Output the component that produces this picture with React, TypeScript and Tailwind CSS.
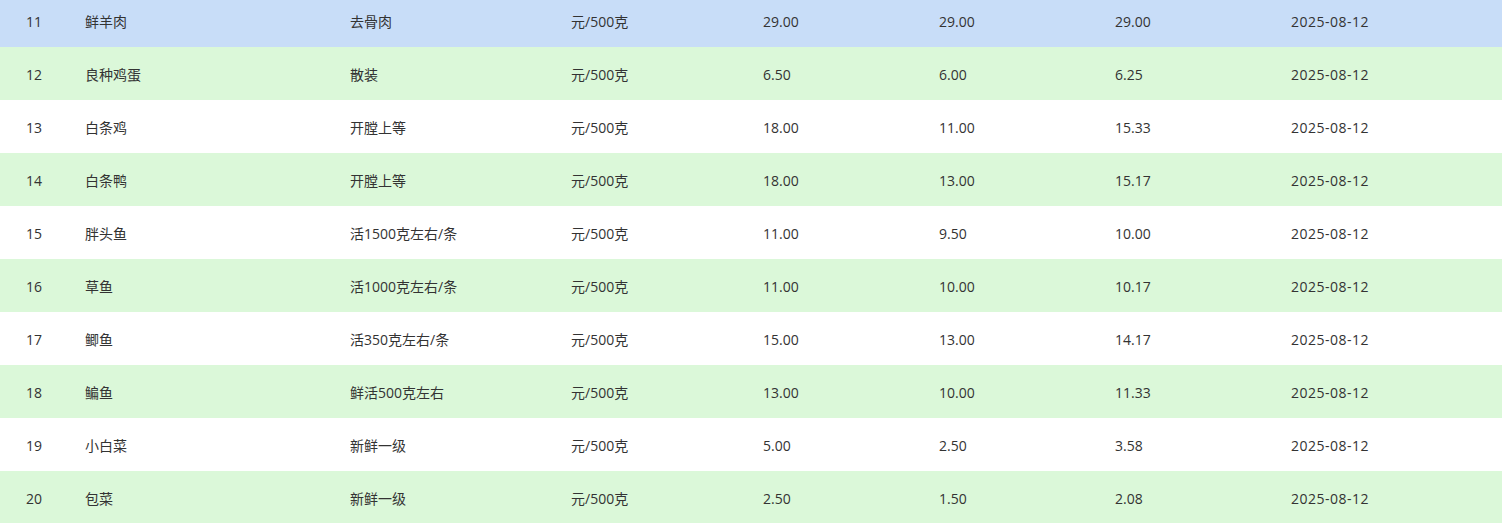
import React from "react";

const rows: string[][] = [
  ["11", "鲜羊肉", "去骨肉", "元/500克", "29.00", "29.00", "29.00", "2025-08-12"],
  ["12", "良种鸡蛋", "散装", "元/500克", "6.50", "6.00", "6.25", "2025-08-12"],
  ["13", "白条鸡", "开膛上等", "元/500克", "18.00", "11.00", "15.33", "2025-08-12"],
  ["14", "白条鸭", "开膛上等", "元/500克", "18.00", "13.00", "15.17", "2025-08-12"],
  ["15", "胖头鱼", "活1500克左右/条", "元/500克", "11.00", "9.50", "10.00", "2025-08-12"],
  ["16", "草鱼", "活1000克左右/条", "元/500克", "11.00", "10.00", "10.17", "2025-08-12"],
  ["17", "鲫鱼", "活350克左右/条", "元/500克", "15.00", "13.00", "14.17", "2025-08-12"],
  ["18", "鳊鱼", "鲜活500克左右", "元/500克", "13.00", "10.00", "11.33", "2025-08-12"],
  ["19", "小白菜", "新鲜一级", "元/500克", "5.00", "2.50", "3.58", "2025-08-12"],
  ["20", "包菜", "新鲜一级", "元/500克", "2.50", "1.50", "2.08", "2025-08-12"],
];

export default function App() {
  return (
    <div
      className="w-[1502px] h-[523px] overflow-hidden bg-white text-[14px] text-[#333333]"
      style={{ fontFamily: '"Open Sans", "Noto Sans CJK SC", sans-serif' }}
    >
      <div className="-mt-[6px]">
        {rows.map((r, i) => {
          const bg = i === 0 ? "bg-[#c8ddf8]" : i % 2 === 1 ? "bg-[#dbf8d9]" : "bg-white";
          return (
            <div
              key={r[0]}
              className={`grid grid-cols-[75px_265px_221px_192px_176px_176px_176px_221px] h-[53px] items-center pt-[2px] ${bg}`}
            >
              <div className="pl-[26px]">{r[0]}</div>
              {r.slice(1, 7).map((c, j) => (
                <div key={j} className="pl-[10px] whitespace-nowrap">
                  {c}
                </div>
              ))}
              <div className="pl-[10px] whitespace-nowrap tracking-[0.5px]">{r[7]}</div>
            </div>
          );
        })}
      </div>
    </div>
  );
}
